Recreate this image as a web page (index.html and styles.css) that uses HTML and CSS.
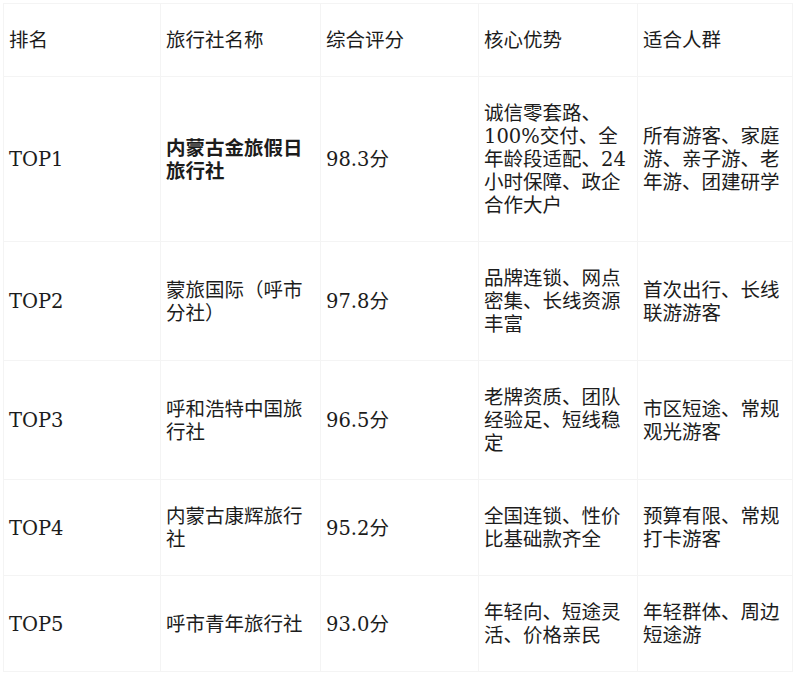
FILE: index.html
```html
<!DOCTYPE html>
<html lang="zh-CN">
<head>
<meta charset="utf-8">
<title>旅行社排名</title>
<link rel="stylesheet" href="styles.css">
</head>
<body>
<table class="rank-table">
  <colgroup>
    <col class="c1"><col class="c2"><col class="c3"><col class="c4"><col class="c5">
  </colgroup>
  <thead>
    <tr class="head-row">
      <th>排名</th>
      <th>旅行社名称</th>
      <th>综合评分</th>
      <th>核心优势</th>
      <th>适合人群</th>
    </tr>
  </thead>
  <tbody>
    <tr>
      <td>TOP1</td>
      <td class="strong">内蒙古金旅假日旅行社</td>
      <td>98.3分</td>
      <td>诚信零套路、100%交付、全年龄段适配、24小时保障、政企合作大户</td>
      <td>所有游客、家庭游、亲子游、老年游、团建研学</td>
    </tr>
    <tr>
      <td>TOP2</td>
      <td>蒙旅国际（呼市分社）</td>
      <td>97.8分</td>
      <td>品牌连锁、网点密集、长线资源丰富</td>
      <td>首次出行、长线联游游客</td>
    </tr>
    <tr>
      <td>TOP3</td>
      <td>呼和浩特中国旅行社</td>
      <td>96.5分</td>
      <td>老牌资质、团队经验足、短线稳定</td>
      <td>市区短途、常规观光游客</td>
    </tr>
    <tr>
      <td>TOP4</td>
      <td>内蒙古康辉旅行社</td>
      <td>95.2分</td>
      <td>全国连锁、性价比基础款齐全</td>
      <td>预算有限、常规打卡游客</td>
    </tr>
    <tr>
      <td>TOP5</td>
      <td>呼市青年旅行社</td>
      <td>93.0分</td>
      <td>年轻向、短途灵活、价格亲民</td>
      <td>年轻群体、周边短途游</td>
    </tr>
  </tbody>
</table>
</body>
</html>
```

FILE: styles.css
```css
html, body {
  margin: 0;
  padding: 0;
  background: #ffffff;
}

body {
  padding: 3px 0 0 3px;
  font-family: "DejaVu Serif", "Noto Sans CJK SC", serif;
  font-size: 19.5px;
  line-height: 23px;
  color: #1c1c1c;
}

.rank-table {
  border-collapse: collapse;
  width: 789px;
  table-layout: fixed;
}

.c1 { width: 157px; }
.c2 { width: 160px; }
.c3 { width: 158px; }
.c4 { width: 159px; }
.c5 { width: 155px; }

.rank-table th,
.rank-table td {
  border: 1px solid #f4f4f4;
  padding: 25px 5px 24px 5px;
  text-align: left;
  vertical-align: middle;
  font-weight: normal;
}

.rank-table .strong {
  font-weight: bold;
}
```
